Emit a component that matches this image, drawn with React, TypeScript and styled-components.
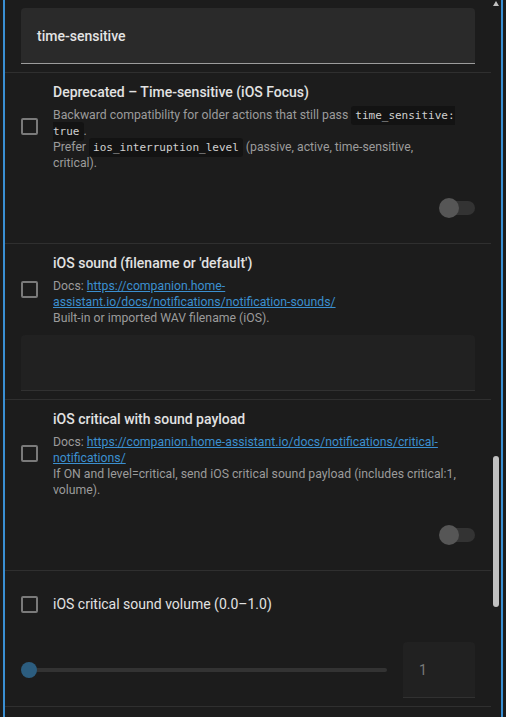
import React from "react";
import styled, { createGlobalStyle } from "styled-components";

const Global = createGlobalStyle`
  html, body { margin: 0; padding: 0; background: #1c1c1c; }
  body { font-family: Roboto, "Noto Sans", sans-serif; overflow: hidden; }
  * { box-sizing: border-box; }
`;

const Frame = styled.div`
  display: flex;
  height: 717px;
  width: 500px;
  margin-left: 3px;
  border-left: 2px solid #3a8fd3;
  border-right: 2px solid #3a8fd3;
  background: #1c1c1c;
  overflow: hidden;
`;

const Scroller = styled.div`
  flex: 1;
  min-width: 0;
  overflow: hidden;
`;

const ScrollTrack = styled.div`
  width: 10px;
  display: flex;
  flex-direction: column;
  align-items: center;
`;

const ArrowUp = styled.div`
  margin-top: 1px;
  width: 0;
  height: 0;
  border-left: 3px solid transparent;
  border-right: 3px solid transparent;
  border-bottom: 5px solid #c1c1c1;
`;

const Thumb = styled.div`
  margin-top: 450px;
  width: 6px;
  height: 151px;
  border-radius: 3px;
  background: #c1c1c1;
`;

const TopField = styled.div`
  padding: 8px 16px;
`;

const Field = styled.div<{ $filled?: boolean }>`
  height: 56px;
  border-radius: 4px 4px 0 0;
  background: ${(p) => (p.$filled ? "#2a2a2a" : "#212121")};
  border-bottom: 1px solid ${(p) => (p.$filled ? "#9c9c9c" : "#313131")};
  display: flex;
  align-items: center;
  padding: 0 16px;
  font-size: 14px;
  font-weight: ${(p) => (p.$filled ? 500 : 400)};
  color: ${(p) => (p.$filled ? "#e4e4e4" : "#7c7c7c")};
`;

const Divider = styled.div`
  height: 1px;
  background: #2f2f2f;
`;

const Section = styled.div`
  padding: 9px 16px 8px;
`;

const Head = styled.div<{ $tall?: boolean }>`
  display: grid;
  grid-template-columns: 32px 1fr;
  align-items: center;
  min-height: ${(p) => (p.$tall ? "48px" : "0")};
`;

const Checkbox = styled.div`
  width: 17px;
  height: 17px;
  border: 2px solid #7a7a7a;
  border-radius: 2px;
`;

const TextBlock = styled.div`
  display: flex;
  flex-direction: column;
  gap: 5px;
  padding-right: 18px;
`;

const Title = styled.div<{ $plain?: boolean }>`
  font-size: 14px;
  line-height: 20px;
  font-weight: ${(p) => (p.$plain ? 400 : 500)};
  color: #e2e2e2;
`;

const Desc = styled.div`
  font-size: 12.25px;
  line-height: 16px;
  color: #9b9b9b;
`;

const Code = styled.code`
  font-family: "DejaVu Sans Mono", "Liberation Mono", monospace;
  font-size: 11px;
  line-height: 1;
  background: #131313;
  color: #d0d0d0;
  padding: 3px 4px;
  border-radius: 3px;
`;

const Link = styled.a`
  color: #3b8fcf;
  text-decoration: underline;
`;

const ToggleArea = styled.div`
  margin-top: 9px;
  height: 55px;
  display: flex;
  justify-content: flex-end;
  align-items: center;
`;

const Toggle = styled.div`
  position: relative;
  width: 36px;
  height: 20px;
  display: flex;
  align-items: center;
  justify-content: flex-end;
`;

const ToggleTrack = styled.div`
  width: 30px;
  height: 14px;
  border-radius: 7px;
  background: #333333;
`;

const ToggleKnob = styled.div`
  position: absolute;
  left: 0;
  top: 0;
  width: 20px;
  height: 20px;
  border-radius: 50%;
  background: #565656;
`;

const ControlField = styled.div<{ $gap: number }>`
  margin-top: ${(p) => p.$gap}px;
`;

const SliderRow = styled.div`
  margin-top: 14px;
  display: grid;
  grid-template-columns: 1fr 72px;
  gap: 16px;
  align-items: center;
`;

const Slider = styled.div`
  position: relative;
  height: 16px;
  display: flex;
  align-items: center;
  padding-left: 8px;
`;

const SliderTrack = styled.div`
  flex: 1;
  height: 4px;
  border-radius: 2px;
  background: #333333;
`;

const SliderKnob = styled.div`
  position: absolute;
  left: 0;
  top: 0;
  width: 16px;
  height: 16px;
  border-radius: 50%;
  background: #2c5d7f;
`;

const NumberBox = styled(Field)`
  padding-left: 16px;
  color: #7a7a7a;
`;

export default function App() {
  return (
    <>
      <Global />
      <Frame>
        <Scroller>
          <TopField>
            <Field $filled>time-sensitive</Field>
          </TopField>
          <Divider />

          <Section>
            <Head>
              <Checkbox />
              <TextBlock>
                <Title>Deprecated – Time-sensitive (iOS Focus)</Title>
                <Desc>
                  Backward compatibility for older actions that still pass <Code>time_sensitive: true</Code>.
                  <br />
                  Prefer <Code>ios_interruption_level</Code> (passive, active, time-sensitive, critical).
                </Desc>
              </TextBlock>
            </Head>
            <ToggleArea>
              <Toggle>
                <ToggleTrack />
                <ToggleKnob />
              </Toggle>
            </ToggleArea>
          </Section>
          <Divider />

          <Section>
            <Head>
              <Checkbox />
              <TextBlock>
                <Title>iOS sound (filename or 'default')</Title>
                <Desc>
                  Docs: <Link>https://companion.home-assistant.io/docs/notifications/notification-sounds/</Link>
                  <br />
                  Built-in or imported WAV filename (iOS).
                </Desc>
              </TextBlock>
            </Head>
            <ControlField $gap={9}>
              <Field />
            </ControlField>
          </Section>
          <Divider />

          <Section>
            <Head>
              <Checkbox />
              <TextBlock>
                <Title>iOS critical with sound payload</Title>
                <Desc>
                  Docs: <Link>https://companion.home-assistant.io/docs/notifications/critical-notifications/</Link>
                  <br />
                  If ON and level=critical, send iOS critical sound payload (includes critical:1, volume).
                </Desc>
              </TextBlock>
            </Head>
            <ToggleArea>
              <Toggle>
                <ToggleTrack />
                <ToggleKnob />
              </Toggle>
            </ToggleArea>
          </Section>
          <Divider />

          <Section>
            <Head $tall>
              <Checkbox />
              <Title $plain>iOS critical sound volume (0.0–1.0)</Title>
            </Head>
            <SliderRow>
              <Slider>
                <SliderTrack />
                <SliderKnob />
              </Slider>
              <NumberBox>1</NumberBox>
            </SliderRow>
          </Section>
          <Divider />
        </Scroller>
        <ScrollTrack>
          <ArrowUp />
          <Thumb />
        </ScrollTrack>
      </Frame>
    </>
  );
}
